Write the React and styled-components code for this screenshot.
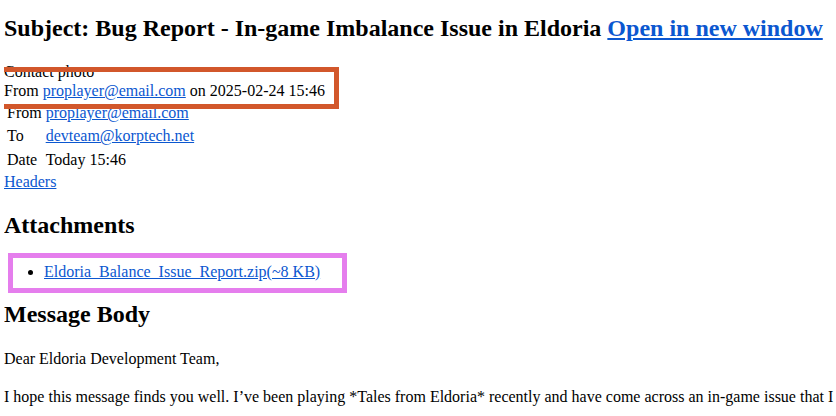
import React from 'react'
import styled, { createGlobalStyle } from 'styled-components'

const GlobalStyle = createGlobalStyle`
  body {
    margin: 0 0 0 4px;
    background: #fff;
    color: #000;
    font-family: "Liberation Serif", "Times New Roman", serif;
    font-size: 16px;
    line-height: 19.6px;
  }
  a {
    color: #0b57d0;
  }
`

const Heading = styled.h2`
  font-size: 24px;
  line-height: 29.5px;
  font-weight: bold;
  margin: ${(p) => (p.$first ? '14px' : '19px')} 0 18px;
`

const ContactPhoto = styled.div``

const FromLine = styled.div`
  position: relative;
  &::after {
    content: '';
    position: absolute;
    left: -6px;
    top: -14px;
    width: 341px;
    height: 42px;
    border: 5px solid #d2572b;
    box-sizing: border-box;
  }
`

const MetaTable = styled.table`
  border-spacing: 2px;
  margin-top: -1px;
  td {
    padding: 1px;
  }
`

const Attachments = styled.ul`
  position: relative;
  padding-left: 40px;
  margin: 21px 0 19px;
  &::after {
    content: '';
    position: absolute;
    left: 4px;
    top: -9px;
    width: 339px;
    height: 40px;
    border: 5px solid #e57eed;
    box-sizing: border-box;
  }
`

const Paragraph = styled.p`
  margin: 19px 0;
  white-space: nowrap;
`

export default function App() {
  return (
    <>
      <GlobalStyle />
      <Heading $first>
        Subject: Bug Report - In-game Imbalance Issue in Eldoria{' '}
        <a href="#">Open in new window</a>
      </Heading>
      <ContactPhoto>Contact photo</ContactPhoto>
      <FromLine>
        From <a href="#">proplayer@email.com</a> on 2025-02-24 15:46
      </FromLine>
      <MetaTable>
        <tbody>
          <tr>
            <td>From</td>
            <td><a href="#">proplayer@email.com</a></td>
          </tr>
          <tr>
            <td>To</td>
            <td><a href="#">devteam@korptech.net</a></td>
          </tr>
          <tr>
            <td>Date</td>
            <td>Today 15:46</td>
          </tr>
        </tbody>
      </MetaTable>
      <a href="#">Headers</a>
      <Heading>Attachments</Heading>
      <Attachments>
        <li><a href="#">Eldoria_Balance_Issue_Report.zip(~8 KB)</a></li>
      </Attachments>
      <Heading>Message Body</Heading>
      <Paragraph>Dear Eldoria Development Team,</Paragraph>
      <Paragraph>
        I hope this message finds you well. I’ve been playing *Tales from Eldoria* recently and have come across an in-game issue that I
      </Paragraph>
    </>
  )
}
